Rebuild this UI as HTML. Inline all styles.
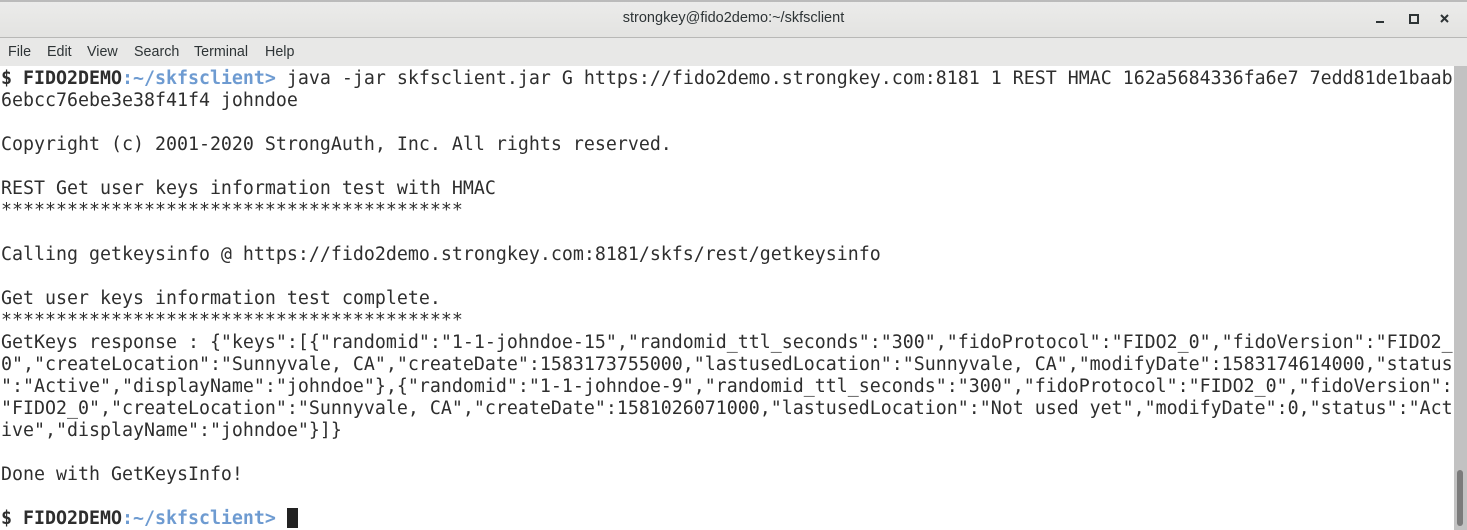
<!DOCTYPE html>
<html><head><meta charset="utf-8"><style>
html,body{margin:0;padding:0;width:1467px;height:530px;overflow:hidden;background:#fff;font-family:"Liberation Sans","DejaVu Sans",sans-serif}
.title{position:absolute;left:0;top:0;width:1467px;height:37px;background:linear-gradient(#ececeb,#e3e3e1);border-bottom:1px solid #b8b8b6;text-align:center;line-height:37px;font-size:14.5px;color:#2e3436}
.top{position:absolute;left:0;top:0;width:1467px;height:2px;background:#bbb}
.menu{position:absolute;left:0;top:38px;width:1467px;height:28px;background:#e8e8e7;font-size:14.3px;color:#2e3436;line-height:28px}
.menu span{position:absolute;top:0}
.term{position:absolute;left:1px;top:68px;font-family:"DejaVu Sans Mono",monospace;font-size:18.27px;line-height:22px;color:#2e2e2e;white-space:pre;margin:0}
.b{font-weight:bold}.c{color:#6e9bd1;font-weight:bold}
.sb{position:absolute;left:1454px;top:66px;width:13px;height:464px;background:#c2c2c2}
.th{position:absolute;left:1457px;top:470px;width:6px;height:56px;background:#7b7b7b;border-radius:3px}
.cur{display:inline-block;width:11px;height:20px;background:#222;vertical-align:-4px}
</style></head><body>
<div class="title">strongkey@fido2demo:~/skfsclient</div><div class="top"></div>
<svg style="position:absolute;left:1370px;top:12px" width="90" height="14"><rect x="6" y="9" width="8" height="2" fill="#2e3436"/><rect x="40" y="3" width="8" height="8" fill="none" stroke="#2e3436" stroke-width="2"/><path d="M71 3l7 7M78 3l-7 7" stroke="#2e3436" stroke-width="2"/></svg>
<div class="menu"><span style="left:8px">File</span><span style="left:47px">Edit</span><span style="left:87px">View</span><span style="left:134px">Search</span><span style="left:194px">Terminal</span><span style="left:265px">Help</span></div>
<pre class="term"><span class="b">$ FIDO2DEMO</span><span class="c">:~/skfsclient&gt;</span> java -jar skfsclient.jar G https://fido2demo.strongkey.com:8181 1 REST HMAC 162a5684336fa6e7 7edd81de1baab
6ebcc76ebe3e38f41f4 johndoe

Copyright (c) 2001-2020 StrongAuth, Inc. All rights reserved.

REST Get user keys information test with HMAC
******************************************

Calling getkeysinfo @ https://fido2demo.strongkey.com:8181/skfs/rest/getkeysinfo

Get user keys information test complete.
******************************************
GetKeys response : {"keys":[{"randomid":"1-1-johndoe-15","randomid_ttl_seconds":"300","fidoProtocol":"FIDO2_0","fidoVersion":"FIDO2_
0","createLocation":"Sunnyvale, CA","createDate":1583173755000,"lastusedLocation":"Sunnyvale, CA","modifyDate":1583174614000,"status
":"Active","displayName":"johndoe"},{"randomid":"1-1-johndoe-9","randomid_ttl_seconds":"300","fidoProtocol":"FIDO2_0","fidoVersion":
"FIDO2_0","createLocation":"Sunnyvale, CA","createDate":1581026071000,"lastusedLocation":"Not used yet","modifyDate":0,"status":"Act
ive","displayName":"johndoe"}]}

Done with GetKeysInfo!

<span class="b">$ FIDO2DEMO</span><span class="c">:~/skfsclient&gt;</span> <span class="cur"></span></pre>
<div class="sb"></div><div class="th"></div>
</body></html>
